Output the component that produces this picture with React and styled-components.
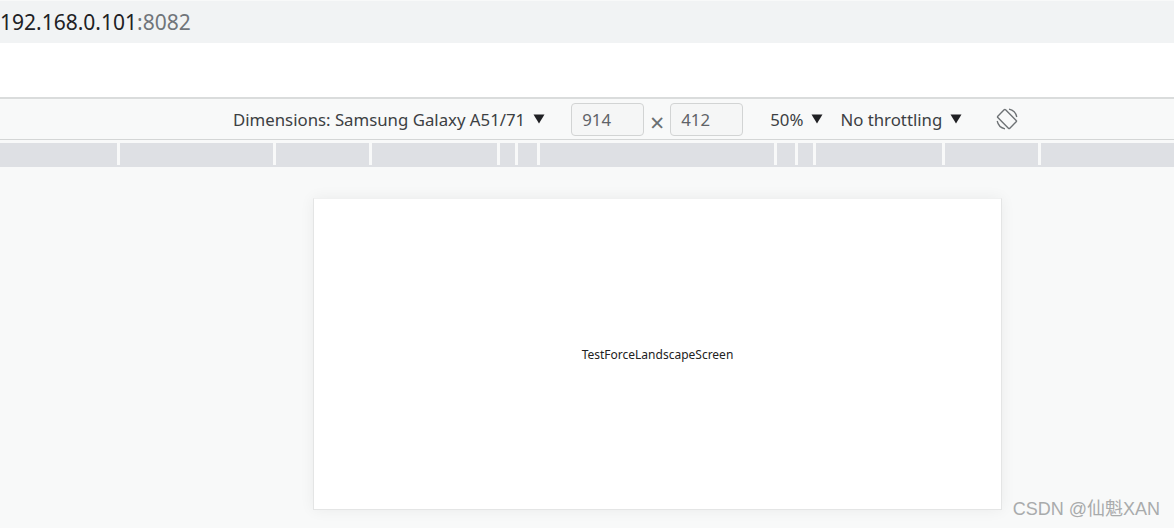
import styled, { createGlobalStyle } from 'styled-components';

const GlobalStyle = createGlobalStyle`
  html, body {
    margin: 0;
    padding: 0;
    background: #f8f9f9;
  }
  body {
    font-family: "Noto Sans", "Open Sans", sans-serif;
  }
`

const Page = styled.div`
  width: 1174px;
  height: 528px;
  overflow: hidden;
  position: relative;
  display: flex;
  flex-direction: column;
`
const AddressBar = styled.div`
  height: 42px;
  margin-top: 1px;
  background: #f1f3f4;
  display: flex;
  align-items: center;
  flex-shrink: 0;
  font-family: "Noto Sans", sans-serif;
  font-size: 21px;
  color: #202124;
`
const Port = styled.span`
  color: #70757a;
`
const BlankBar = styled.div`
  height: 54px;
  background: #fff;
  flex-shrink: 0;
`
const Toolbar = styled.div`
  height: 40px;
  border-top: 2px solid #dadcdc;
  border-bottom: 1px solid #d4d6d6;
  background: #f8f9f9;
  display: flex;
  align-items: center;
  padding-left: 233px;
  flex-shrink: 0;
  font-size: 16.8px;
  color: #3c4043;
`
const Menu = styled.div`
  display: flex;
  align-items: center;
  gap: 8px;
  margin-left: ${p => p.$left}px;
  white-space: nowrap;
`
const Arrow = styled.svg`
  width: 12px;
  height: 10px;
  margin-top: -1px;
  fill: #202124;
`
const SizeInput = styled.div`
  width: 73px;
  height: 33px;
  border: 1px solid #d2d4d4;
  border-radius: 4px;
  background: #f5f6f6;
  box-sizing: border-box;
  display: flex;
  align-items: center;
  padding-left: 10px;
  color: #5f6368;
  margin-left: ${p => p.$left}px;
`
const Times = styled.span`
  width: 26px;
  text-align: center;
  color: #6b6f72;
  font-size: 25px;
  line-height: 26px;
  padding-top: 5px;
`
const RotateIcon = styled.svg`
  width: 24px;
  height: 24px;
  margin-left: 33px;
  fill: none;
  stroke: #6e7275;
`
const Ruler = styled.div`
  height: 24px;
  margin-top: 3px;
  background: #dee0e4;
  display: flex;
  flex-shrink: 0;
`
const RulerSegment = styled.div`
  width: ${p => p.$width}px;
  flex: 0 0 auto;
  height: 22px;
  border-right: ${p => (p.$last ? 'none' : '3px solid #f8f9f9')};
  box-sizing: border-box;
`
const Canvas = styled.div`
  flex: 1;
  display: flex;
  align-items: flex-start;
  padding: 31px 0 0 313px;
  background: #f8f9f9;
`
const Screen = styled.div`
  width: 689px;
  height: 312px;
  box-sizing: border-box;
  background: #fff;
  border: 1px solid #e4e5e5;
  border-top-color: #f0f1f1;
  box-shadow: 0 0 14px rgba(0, 0, 0, 0.06);
  display: flex;
  align-items: center;
  justify-content: center;
  font-size: 12px;
  color: #222;
`
const Watermark = styled.div`
  position: absolute;
  right: 14px;
  bottom: 8px;
  font-family: "Liberation Sans", "Noto Sans CJK SC", sans-serif;
  font-size: 18px;
  color: #a9abac;
`

const segments = [120, 156, 96, 128, 18, 22, 237, 21, 18, 129, 96, 133]

function DownArrow() {
  return (
    <Arrow viewBox="0 0 12 10">
      <path d="M0.5 0.5h11L6 9.5z" />
    </Arrow>
  );
}

function App() {
  return (
    <Page>
      <GlobalStyle />
      <AddressBar>192.168.0.101<Port>:8082</Port></AddressBar>
      <BlankBar />
      <Toolbar>
        <Menu>Dimensions: Samsung Galaxy A51/71 <DownArrow /></Menu>
        <SizeInput $left={26}>914</SizeInput>
        <Times>×</Times>
        <SizeInput>412</SizeInput>
        <Menu $left={27}>50% <DownArrow /></Menu>
        <Menu $left={17}>No throttling <DownArrow /></Menu>
        <RotateIcon viewBox="0 0 24 24">
          <rect x="6.5" y="3.5" width="11" height="17" rx="1" transform="rotate(-45 12 12)" strokeWidth="1.4" />
          <path d="M14 2.2A10 10 0 0 1 21.8 10M10 21.8A10 10 0 0 1 2.2 14" strokeWidth="1.3" />
        </RotateIcon>
      </Toolbar>
      <Ruler>
        {segments.map((width, i) => <RulerSegment key={i} $width={width} $last={i === segments.length - 1} />)}
      </Ruler>
      <Canvas>
        <Screen>TestForceLandscapeScreen</Screen>
      </Canvas>
      <Watermark>CSDN @仙魁XAN</Watermark>
    </Page>
  );
}

export default App
